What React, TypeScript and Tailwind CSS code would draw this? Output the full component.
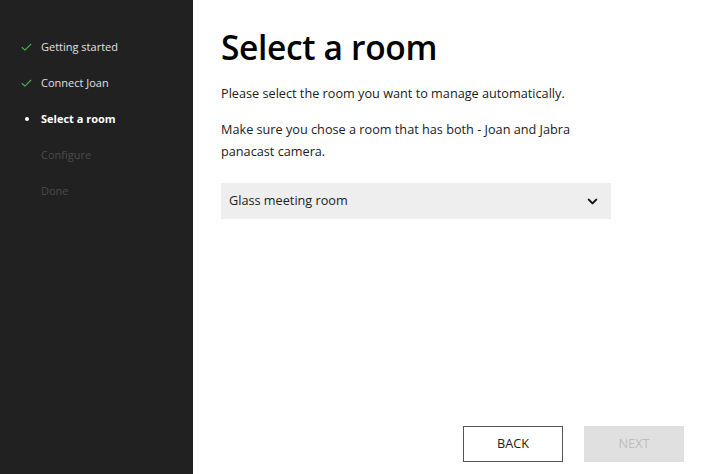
import { Check, ChevronDown } from 'lucide-react'

const steps = [
  { label: 'Getting started', state: 'done' },
  { label: 'Connect Joan', state: 'done' },
  { label: 'Select a room', state: 'current' },
  { label: 'Configure', state: 'todo' },
  { label: 'Done', state: 'todo' },
]

export default function App() {
  return (
    <div
      className="flex h-[474px] w-[711px] overflow-hidden bg-white"
      style={{ fontFamily: '"Open Sans", "Noto Sans", sans-serif' }}
    >
      {/* Sidebar */}
      <div className="flex w-[193px] shrink-0 flex-col bg-[#212121] pt-[29px]">
        {steps.map((s) => (
          <div key={s.label} className="flex h-[36px] items-center pl-[20px]">
            <span className="flex w-[21px] items-center">
              {s.state === 'done' && (
                <Check className="h-[13px] w-[13px] text-[#4caf50]" strokeWidth={2} />
              )}
              {s.state === 'current' && (
                <span className="ml-[5px] h-[4px] w-[4px] rounded-full bg-white" />
              )}
            </span>
            <span
              className={`text-[11px] ${
                s.state === 'current'
                  ? 'font-bold text-white'
                  : s.state === 'done'
                  ? 'text-[#e0e0e0]'
                  : 'text-[#4a4a4a]'
              }`}
            >
              {s.label}
            </span>
          </div>
        ))}
      </div>

      {/* Main */}
      <div className="flex flex-1 flex-col pl-[28px] pr-[27px] pt-[24px] pb-[12px]">
        <h1 className="text-[33.5px] font-semibold leading-[46px] tracking-[-0.01em] text-black">
          Select a room
        </h1>
        <p className="mt-[12px] text-[12.7px] leading-[22px] text-[#212121]">
          Please select the room you want to manage automatically.
        </p>
        <p className="mt-[14px] w-[390px] text-[12.7px] leading-[22px] text-[#212121]">
          Make sure you chose a room that has both - Joan and Jabra panacast camera.
        </p>
        <div className="mt-[21px] flex h-[36px] w-[390px] items-center justify-between bg-[#eeeeee] pl-[8px] pr-[11px]">
          <span className="text-[12.7px] text-[#212121]">Glass meeting room</span>
          <ChevronDown className="h-[15px] w-[15px] text-[#111]" strokeWidth={3.2} />
        </div>

        <div className="mt-auto flex justify-end gap-[21px]">
          <button className="flex h-[36px] w-[100px] items-center justify-center border border-[#555] bg-white text-[12.7px] text-[#212121]">
            BACK
          </button>
          <button className="flex h-[36px] w-[100px] items-center justify-center bg-[#e0e0e0] text-[12.7px] text-[#bdbdbd]">
            NEXT
          </button>
        </div>
      </div>
    </div>
  )
}
